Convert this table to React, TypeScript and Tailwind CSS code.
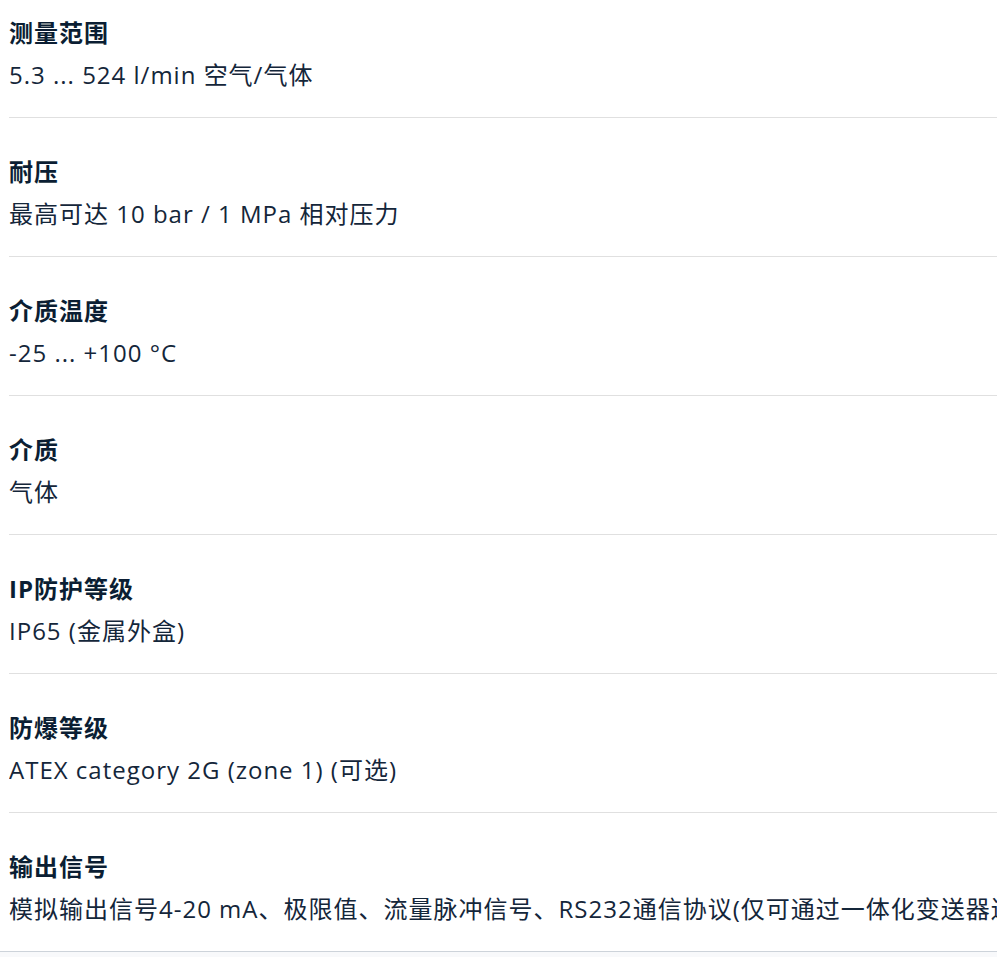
import React from "react";

const rows: { label: string; value: string }[] = [
  { label: "测量范围", value: "5.3 ... 524 l/min 空气/气体" },
  { label: "耐压", value: "最高可达 10 bar / 1 MPa 相对压力" },
  { label: "介质温度", value: "-25 ... +100 °C" },
  { label: "介质", value: "气体" },
  { label: "IP防护等级", value: "IP65 (金属外盒)" },
  { label: "防爆等级", value: "ATEX category 2G (zone 1) (可选)" },
  {
    label: "输出信号",
    value:
      "模拟输出信号4-20 mA、极限值、流量脉冲信号、RS232通信协议(仅可通过一体化变送器连接)",
  },
];

export default function App() {
  return (
    <div
      className="min-h-screen w-[997px] overflow-hidden bg-[#f8f9fb]"
      style={{ fontFamily: '"Open Sans", "Noto Sans CJK SC", sans-serif' }}
    >
      <div className="bg-white border-b border-[#cdd3da]">
        <div className="pl-[9px]">
          {rows.map((r, i) => (
            <div
              key={r.label}
              className={
                (i === 0 ? "pt-[12px] " : "pt-[33px] ") +
                "pb-[21px] " +
                (i < rows.length - 1 ? "border-b border-[#e0e0e0]" : "")
              }
            >
              <div className="text-[24px] leading-[42px] tracking-[1px] font-bold text-[#0b1e33] whitespace-nowrap">
                {r.label}
              </div>
              <div className="text-[24px] leading-[42px] tracking-[1px] text-[#14263a] whitespace-nowrap overflow-hidden">
                {r.value}
              </div>
            </div>
          ))}
        </div>
      </div>
    </div>
  );
}
